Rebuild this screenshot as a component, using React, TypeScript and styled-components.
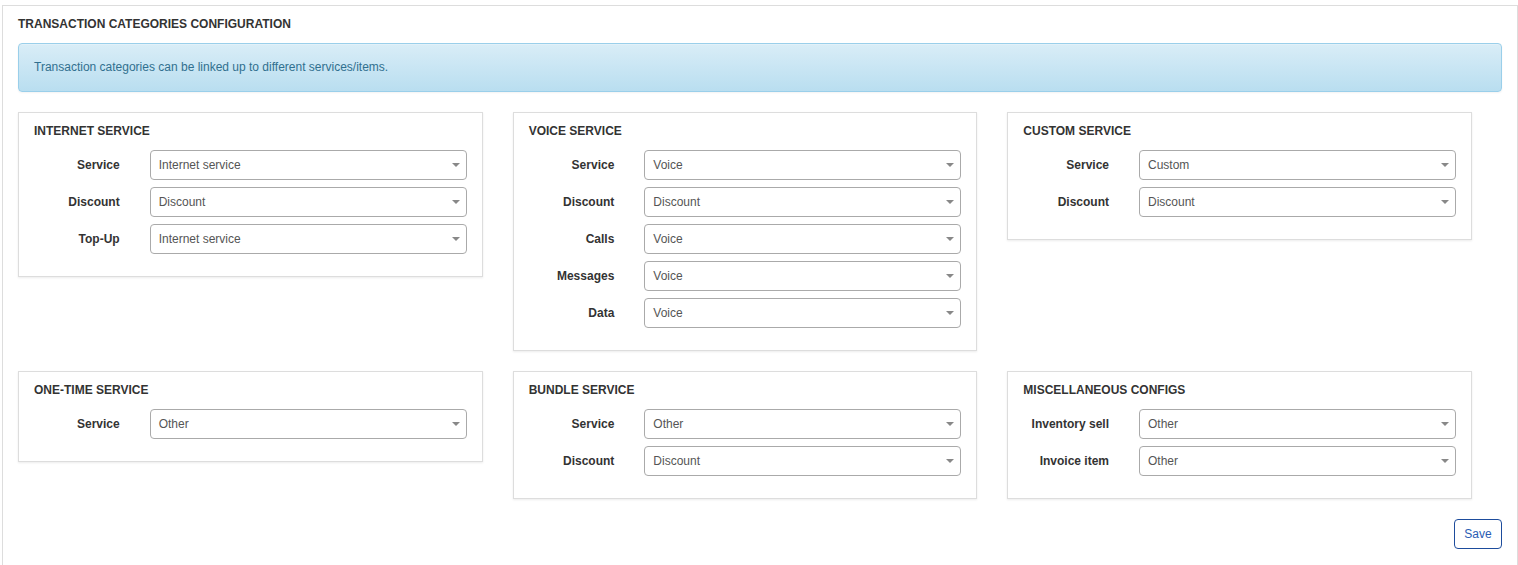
import React from "react";
import styled, { createGlobalStyle } from "styled-components";

const GlobalStyle = createGlobalStyle`
  html, body {
    margin: 0;
    padding: 0;
    background: #ffffff;
  }
  body {
    font-family: "Liberation Sans", Arial, Helvetica, sans-serif;
    font-size: 12px;
    color: #333333;
  }
  * { box-sizing: border-box; }
`;

const Page = styled.div`
  padding: 5px 0 0 2px;
  width: 1518px;
`;

const Panel = styled.section`
  width: 1516px;
  min-height: 560px;
  border: 1px solid #dddddd;
  border-bottom: none;
  padding: 10px 15px 14px;
  background: #ffffff;
`;

const PanelTitle = styled.h3`
  margin: 0;
  font-size: 12px;
  line-height: 17px;
  font-weight: bold;
  color: #333333;
  text-transform: uppercase;
`;

const InfoBox = styled.div`
  margin-top: 10px;
  padding: 15px;
  line-height: 17px;
  font-size: 12px;
  color: #31708f;
  border: 1px solid #9acfea;
  border-radius: 4px;
  background-image: linear-gradient(to bottom, #d9edf7 0%, #b9def0 100%);
  box-shadow: inset 0 1px 0 rgba(255, 255, 255, 0.25), 0 1px 2px rgba(0, 0, 0, 0.05);
`;

const CardGrid = styled.div`
  margin-top: 20px;
  display: grid;
  grid-template-columns: repeat(3, 1fr);
  row-gap: 20px;
  align-items: start;
`;

const Card = styled.div`
  margin-right: 30px;
  border: 1px solid #dddddd;
  background: #ffffff;
  box-shadow: 0 1px 2px rgba(0, 0, 0, 0.08);
  padding: 10px 15px 15px;
`;

const CardTitle = styled.h4`
  margin: 0 0 10px;
  font-size: 12px;
  line-height: 17px;
  font-weight: bold;
  color: #333333;
  text-transform: uppercase;
`;

const FieldRow = styled.div`
  display: flex;
  align-items: center;
  margin: 0 -15px 7px;
`;

const FieldLabel = styled.label`
  flex: 0 0 25%;
  padding: 0 15px;
  text-align: right;
  font-weight: bold;
  font-size: 12px;
  color: #333333;
  white-space: nowrap;
`;

const FieldControl = styled.div`
  flex: 0 0 75%;
  padding: 0 15px;
`;

const SelectBox = styled.div`
  height: 30px;
  display: flex;
  align-items: center;
  justify-content: space-between;
  padding: 0 6px 0 8px;
  border: 1px solid #aaaaaa;
  border-radius: 4px;
  background: #ffffff;
  color: #555555;
  font-size: 12px;
  cursor: pointer;
`;

const Caret = styled.span`
  width: 0;
  height: 0;
  border-left: 4px solid transparent;
  border-right: 4px solid transparent;
  border-top: 4px solid #888888;
`;

const Footer = styled.div`
  display: flex;
  justify-content: flex-end;
  margin-top: 20px;
`;

const SaveButton = styled.button`
  height: 30px;
  width: 48px;
  padding: 0;
  font-family: "Liberation Sans", Arial, Helvetica, sans-serif;
  font-size: 12px;
  color: #2a5cb3;
  background: #ffffff;
  border: 1px solid #1d4c9c;
  border-radius: 4px;
  cursor: pointer;
`;

type Field = { label: string; value: string };
type Section = { title: string; fields: Field[] };

const sections: Section[] = [
  {
    title: "Internet service",
    fields: [
      { label: "Service", value: "Internet service" },
      { label: "Discount", value: "Discount" },
      { label: "Top-Up", value: "Internet service" },
    ],
  },
  {
    title: "Voice service",
    fields: [
      { label: "Service", value: "Voice" },
      { label: "Discount", value: "Discount" },
      { label: "Calls", value: "Voice" },
      { label: "Messages", value: "Voice" },
      { label: "Data", value: "Voice" },
    ],
  },
  {
    title: "Custom service",
    fields: [
      { label: "Service", value: "Custom" },
      { label: "Discount", value: "Discount" },
    ],
  },
  {
    title: "One-time service",
    fields: [{ label: "Service", value: "Other" }],
  },
  {
    title: "Bundle service",
    fields: [
      { label: "Service", value: "Other" },
      { label: "Discount", value: "Discount" },
    ],
  },
  {
    title: "Miscellaneous configs",
    fields: [
      { label: "Inventory sell", value: "Other" },
      { label: "Invoice item", value: "Other" },
    ],
  },
];

export default function App() {
  return (
    <Page>
      <GlobalStyle />
      <Panel>
        <PanelTitle>Transaction categories configuration</PanelTitle>
        <InfoBox>Transaction categories can be linked up to different services/items.</InfoBox>
        <CardGrid>
          {sections.map((s) => (
            <Card key={s.title}>
              <CardTitle>{s.title}</CardTitle>
              {s.fields.map((f) => (
                <FieldRow key={f.label}>
                  <FieldLabel>{f.label}</FieldLabel>
                  <FieldControl>
                    <SelectBox>
                      <span>{f.value}</span>
                      <Caret />
                    </SelectBox>
                  </FieldControl>
                </FieldRow>
              ))}
            </Card>
          ))}
        </CardGrid>
        <Footer>
          <SaveButton>Save</SaveButton>
        </Footer>
      </Panel>
    </Page>
  );
}
